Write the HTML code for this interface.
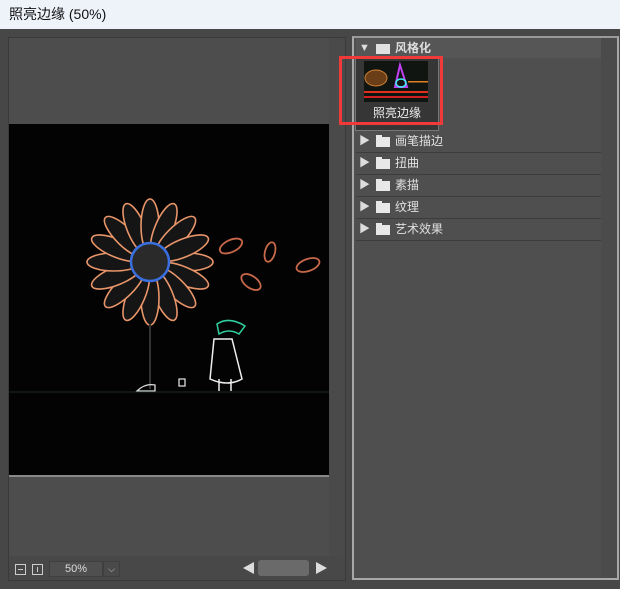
<!DOCTYPE html>
<html><head><meta charset="utf-8"><style>
*{margin:0;padding:0;box-sizing:border-box}
body{width:620px;height:589px;background:#474747;position:relative;overflow:hidden;font-family:"Liberation Sans","Noto Sans CJK SC",sans-serif}
.title{position:absolute;left:0;top:0;width:620px;height:29px;background:#eef2f9;color:#111;font-size:14px;line-height:29px;padding-left:9px}
.lp{position:absolute;left:8px;top:37px;width:338px;height:544px;border:1px solid #3a3a3a;background:#4d4d4d}
.vs{position:absolute;left:320px;top:0;width:16px;height:542px;background:#4a4a4a}
.img{position:absolute;left:0;top:86px;width:320px;height:353px;background:#030303;border-bottom:2px solid #888}
.bar{position:absolute;left:0;top:518px;width:336px;height:24px;background:#484848}
.rp{position:absolute;left:352px;top:36px;width:267px;height:544px;border:2px solid #a8a8a8;border-top-color:#999;background:#4f4f4f}
.rs{position:absolute;right:0;top:0;width:16px;height:540px;background:#4b4b4b}
.row{position:absolute;left:2px;width:245px;height:22px;border-bottom:1px solid #3c3c3c;color:#e0e0e0;font-size:12px;line-height:21px}
.row .tri{position:absolute;left:3px;top:0;color:#ddd;font-size:11px}
.row .fd{position:absolute;left:20px;top:6px;width:14px;height:10px;background:#e8e8e8}
.row .fd:before{content:"";position:absolute;left:0;top:-2px;width:6px;height:3px;background:#e8e8e8}
.row .t{position:absolute;left:39px;top:0}
</style></head><body>
<div class="title">照亮边缘 (50%)</div>
<div class="lp">
 <div class="vs"></div>
 <div class="img">
  <svg width="320" height="353" viewBox="0 0 320 353">
   <g transform="translate(141,138)" fill="#151515" stroke="#e8956a" stroke-width="1.6">
    <ellipse rx="27" ry="9" transform="rotate(0) translate(36,0)"/>
    <ellipse rx="27" ry="9" transform="rotate(22.5) translate(36,0)"/>
    <ellipse rx="27" ry="9" transform="rotate(45) translate(36,0)"/>
    <ellipse rx="27" ry="9" transform="rotate(67.5) translate(36,0)"/>
    <ellipse rx="27" ry="9" transform="rotate(90) translate(36,0)"/>
    <ellipse rx="27" ry="9" transform="rotate(112.5) translate(36,0)"/>
    <ellipse rx="27" ry="9" transform="rotate(135) translate(36,0)"/>
    <ellipse rx="27" ry="9" transform="rotate(157.5) translate(36,0)"/>
    <ellipse rx="27" ry="9" transform="rotate(180) translate(36,0)"/>
    <ellipse rx="27" ry="9" transform="rotate(202.5) translate(36,0)"/>
    <ellipse rx="27" ry="9" transform="rotate(225) translate(36,0)"/>
    <ellipse rx="27" ry="9" transform="rotate(247.5) translate(36,0)"/>
    <ellipse rx="27" ry="9" transform="rotate(270) translate(36,0)"/>
    <ellipse rx="27" ry="9" transform="rotate(292.5) translate(36,0)"/>
    <ellipse rx="27" ry="9" transform="rotate(315) translate(36,0)"/>
    <ellipse rx="27" ry="9" transform="rotate(337.5) translate(36,0)"/>
    <circle r="19" fill="#2a2a2a" stroke="#3a6fe0" stroke-width="2.5"/>
   </g>
   <g fill="none" stroke="#c8684a" stroke-width="1.8">
    <ellipse cx="222" cy="122" rx="12" ry="6" transform="rotate(-25 222 122)"/>
    <ellipse cx="261" cy="128" rx="5" ry="10" transform="rotate(15 261 128)"/>
    <ellipse cx="299" cy="141" rx="12" ry="6" transform="rotate(-20 299 141)"/>
    <ellipse cx="242" cy="158" rx="11" ry="6" transform="rotate(35 242 158)"/>
   </g>
   <line x1="141" y1="200" x2="141" y2="265" stroke="#333" stroke-width="2"/>
   <path d="M208 200 q12 -8 28 2 l-6 8 q-10 -6 -20 0z" fill="none" stroke="#2fd0a0" stroke-width="1.5"/>
   <path d="M205 215 l-4 40 q18 8 32 0 l-10 -40z M210 255 v12 M222 255 v12" fill="none" stroke="#eee" stroke-width="1.5"/>
   <path d="M128 267 q8 -8 18 -6 v6z M170 255 h6 v7 h-6z" fill="none" stroke="#ddd" stroke-width="1.3"/>
   <line x1="0" y1="268" x2="320" y2="268" stroke="#1c2a26" stroke-width="1"/>
  </svg>
 </div>
 <div class="bar">
  <div style="position:absolute;left:6px;top:8px;width:11px;height:11px;border:1px solid #ccc"><div style="position:absolute;left:2px;top:4px;width:5px;height:1px;background:#ccc"></div></div>
  <div style="position:absolute;left:23px;top:8px;width:11px;height:11px;border:1px solid #ccc"><div style="position:absolute;left:4px;top:2px;width:1px;height:5px;background:#ccc"></div></div>
  <div style="position:absolute;left:40px;top:5px;width:54px;height:16px;background:#4f4f4f;border:1px solid #3f3f3f;color:#ddd;font-size:11px;text-align:center;line-height:14px">50%</div>
  <div style="position:absolute;left:94px;top:5px;width:17px;height:16px;background:#4a4a4a;border:1px solid #3f3f3f;color:#ccc;font-size:9px;text-align:center;line-height:14px">⌵</div>
  <div style="position:absolute;left:234px;top:6px;width:0;height:0;border-top:6px solid transparent;border-bottom:6px solid transparent;border-right:11px solid #ddd"></div>
  <div style="position:absolute;left:249px;top:4px;width:51px;height:16px;background:#6a6a6a;border-radius:3px"></div>
  <div style="position:absolute;left:307px;top:6px;width:0;height:0;border-top:6px solid transparent;border-bottom:6px solid transparent;border-left:11px solid #ddd"></div>
 </div>
</div>
<div class="rp">
 <div class="rs"></div>
 <div style="position:absolute;left:2px;top:0;width:245px;height:20px;background:#565656;color:#ddd;font-size:12px;font-weight:bold;line-height:20px">
  <span style="position:absolute;left:3px;font-size:11px">▼</span>
  <div style="position:absolute;left:20px;top:6px;width:14px;height:10px;background:#e0e0e0"></div>
  <span style="position:absolute;left:39px">风格化</span>
 </div>
 <div style="position:absolute;left:1px;top:20px;width:84px;height:73px;background:#363636;border:1px solid #777">
  <svg width="64" height="41" style="position:absolute;left:8px;top:2px" viewBox="0 0 64 41">
   <rect width="64" height="41" fill="#101512"/>
   <ellipse cx="12" cy="17" rx="11" ry="8" fill="#6a3f18" stroke="#d08030"/>
   <path d="M36 4 l-5 22 h12z" fill="none" stroke="#c040f0" stroke-width="2"/>
   <ellipse cx="37" cy="22" rx="5" ry="4" fill="none" stroke="#40f0f0" stroke-width="1.5"/>
   <rect y="30" width="64" height="2" fill="#e03020"/><rect y="35" width="64" height="2" fill="#d02020"/>
   <rect x="44" y="20" width="20" height="1.5" fill="#e08020"/>
  </svg>
  <div style="position:absolute;left:0;top:45px;width:82px;text-align:center;color:#eee;font-size:12px">照亮边缘</div>
 </div>
 <div class="row" style="top:93px"><span class="tri">▶</span><div class="fd"></div><span class="t">画笔描边</span></div>
 <div class="row" style="top:115px"><span class="tri">▶</span><div class="fd"></div><span class="t">扭曲</span></div>
 <div class="row" style="top:137px"><span class="tri">▶</span><div class="fd"></div><span class="t">素描</span></div>
 <div class="row" style="top:159px"><span class="tri">▶</span><div class="fd"></div><span class="t">纹理</span></div>
 <div class="row" style="top:181px"><span class="tri">▶</span><div class="fd"></div><span class="t">艺术效果</span></div>
</div>
<div style="position:absolute;left:339px;top:56px;width:104px;height:69px;border:3px solid #f03a3a"></div>
</body></html>
